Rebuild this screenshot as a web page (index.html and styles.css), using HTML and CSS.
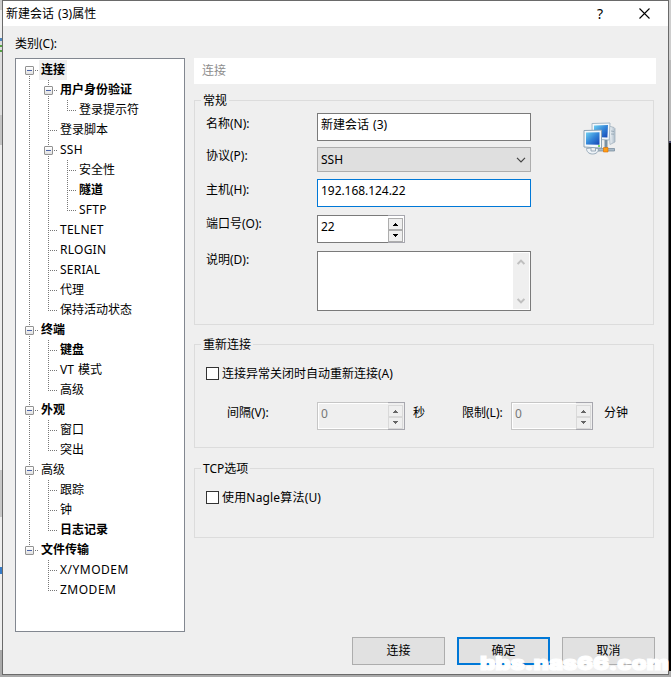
FILE: index.html
```html
<!DOCTYPE html>
<html lang="zh-CN">
<head>
<meta charset="utf-8">
<title>新建会话 (3)属性</title>
<link rel="stylesheet" href="styles.css">
</head>
<body>
<main class="dialog">
  <header class="titlebar">
    <h1>新建会话 (3)属性</h1>
    <span class="help">?</span>
    <svg class="close" width="11" height="11" viewBox="0 0 11 11"><path d="M.5.5l10 10M10.5.5l-10 10" fill="none" stroke="#000" stroke-width="1.1"/></svg>
  </header>
  <div class="category">类别(C):</div>
  <div class="body">
    <nav class="tree">
      <ul>
        <li><div class="row open"><b class="selected">连接</b></div>
          <ul>
            <li><div class="row open"><b>用户身份验证</b></div>
              <ul><li><div class="row">登录提示符</div></li></ul>
            </li>
            <li><div class="row">登录脚本</div></li>
            <li><div class="row open latin">SSH</div>
              <ul>
                <li><div class="row">安全性</div></li>
                <li><div class="row"><b>隧道</b></div></li>
                <li><div class="row latin">SFTP</div></li>
              </ul>
            </li>
            <li><div class="row latin">TELNET</div></li>
            <li><div class="row latin">RLOGIN</div></li>
            <li><div class="row latin">SERIAL</div></li>
            <li><div class="row">代理</div></li>
            <li><div class="row">保持活动状态</div></li>
          </ul>
        </li>
        <li><div class="row open"><b>终端</b></div>
          <ul>
            <li><div class="row"><b>键盘</b></div></li>
            <li><div class="row">VT 模式</div></li>
            <li><div class="row">高级</div></li>
          </ul>
        </li>
        <li><div class="row open"><b>外观</b></div>
          <ul>
            <li><div class="row">窗口</div></li>
            <li><div class="row">突出</div></li>
          </ul>
        </li>
        <li><div class="row open">高级</div>
          <ul>
            <li><div class="row">跟踪</div></li>
            <li><div class="row">钟</div></li>
            <li><div class="row"><b>日志记录</b></div></li>
          </ul>
        </li>
        <li><div class="row open"><b>文件传输</b></div>
          <ul>
            <li><div class="row latin wide">X/YMODEM</div></li>
            <li><div class="row latin wide">ZMODEM</div></li>
          </ul>
        </li>
      </ul>
    </nav>
    <section class="panel">
      <h2>连接</h2>
      <fieldset class="general">
        <legend>常规</legend>
        <div class="form">
          <label>名称(N):</label><div class="field">新建会话 (3)</div>
          <label>协议(P):</label><div class="field select"><span>SSH</span><svg width="10" height="6" viewBox="0 0 10 6"><path d="M1 .8l4 4 4-4" fill="none" stroke="#444" stroke-width="1.2"/></svg></div>
          <label>主机(H):</label><div class="field focus">192.168.124.22</div>
          <label>端口号(O):</label><div class="field spin"><span>22</span><div class="buttons"><i class="up"></i><i class="down"></i></div></div>
          <label>说明(D):</label><div class="field area"><div class="scroll">
            <svg width="8" height="6" viewBox="0 0 8 6"><path d="M.6 5L4 1.6 7.4 5" fill="none" stroke="#bfbfbf" stroke-width="2"/></svg>
            <svg width="8" height="6" viewBox="0 0 8 6"><path d="M.6 1L4 4.4 7.4 1" fill="none" stroke="#bfbfbf" stroke-width="2"/></svg>
          </div></div>
        </div>
        <svg class="session-icon" width="34" height="34" viewBox="0 0 34 34">
          <defs>
            <linearGradient id="screen" x1="0" y1="0" x2="1" y2="1"><stop offset="0" stop-color="#6fd0f2"/><stop offset=".5" stop-color="#3385d8"/><stop offset="1" stop-color="#1545b5"/></linearGradient>
            <linearGradient id="tower" x1="0" y1="0" x2="1" y2="0"><stop offset="0" stop-color="#f8fbfd"/><stop offset="1" stop-color="#aebdca"/></linearGradient>
          </defs>
          <path d="M26 4l5 1.5 1 1V20l-5 2.500z" fill="url(#tower)" stroke="#a4b3bf" stroke-width=".8"/>
          <path d="M28 9l3 .5M28 12l3 .2" stroke="#8799a7" stroke-width=".7"/>
          <path d="M9 1.500l18-.5-.8 17-17-1z" fill="#f4f8fb" stroke="#a5b8c7"/>
          <path d="M11 3.500l14-.4-.6 12.400-13.400-.5z" fill="url(#screen)"/>
          <path d="M21.500 18h3v9h-3z" fill="#7b91a3"/>
          <path d="M13 26.500h18.500v2.500H13z" fill="#a9bac8" stroke="#71879a" stroke-width=".7"/>
          <path d="M3.500 26.500c0 3 2.300 5.500 6 5.500s6-2 6-5l-3-1v3H8v-3z" fill="#eef3f7" stroke="#91a4b4" stroke-width=".9"/>
          <path d="M1 8.500l17.500-.4v18L1 25z" fill="#f4f8fb" stroke="#8ea3b4"/>
          <path d="M3 10.500l13.500-.3v12.600L3 22.500z" fill="url(#screen)"/>
          <path d="M15 24h2" stroke="#5ed22f" stroke-width="1.300"/>
          <path d="M20.500 25.500h4.500v4.500h-4.500z" fill="#ff9d13" stroke="#d96b05" stroke-width=".6"/>
        </svg>
      </fieldset>
      <fieldset class="reconnect">
        <legend>重新连接</legend>
        <label class="check"><i></i>连接异常关闭时自动重新连接(A)</label>
        <div class="timing">
          <label>间隔(V):</label><div class="field spin disabled"><span>0</span><div class="buttons"><i class="up"></i><i class="down"></i></div></div><span>秒</span>
          <label>限制(L):</label><div class="field spin disabled"><span>0</span><div class="buttons"><i class="up"></i><i class="down"></i></div></div><span>分钟</span>
        </div>
      </fieldset>
      <fieldset class="tcp">
        <legend>TCP选项</legend>
        <label class="check nagle"><i></i>使用Nagle算法(U)</label>
      </fieldset>
    </section>
  </div>
  <footer>
    <div class="button">连接</div><div class="button primary">确定</div><div class="button">取消</div>
  </footer>
</main>
<aside class="desktop"></aside>
<div class="watermark">bbs.nas66.com</div>
</body>
</html>
```
FILE: styles.css
```css
*, *::before { box-sizing: border-box; }
body {
  margin: 0;
  width: 671px;
  height: 677px;
  overflow: hidden;
  position: relative;
  display: flex;
  padding-left: 2px;
  background: linear-gradient(#ccc 0 10px, #eee 10px 38px, #4d84bc 38px 41px, #ddd 41px 45px, #55a344 45px 47px, #ddd 47px 50px, #55a344 50px 52px, #ddd 52px 115px, #c4c4c4 115px 145px, #ececec 145px 470px, #c8c8c8 470px 517px, #eee 517px 567px, #357bc8 567px 574px, #eee 574px 650px, #aaa 650px);
  font: 12px/16px "Noto Sans", "Noto Sans CJK SC", sans-serif;
  word-spacing: 1px;
  color: #000;
}
h1, h2 { margin: 0; font: inherit; }
ul { list-style: none; margin: 0; padding: 0; }
.latin { letter-spacing: .25px; }
.latin.wide { letter-spacing: .5px; }
.dialog {
  width: 667px;
  height: 675px;
  flex: none;
  border: 1px solid #6a6a6a;
  background: #efefef;
  display: flex;
  flex-direction: column;
}
.desktop {
  width: 2px;
  flex: none;
  background: linear-gradient(#cecece 0 60px, #b9b9b9 60px 141px, #446 141px 143px, #000 143px 671px, #aaa 671px);
}
body::after {
  content: "";
  position: absolute;
  left: 0;
  right: 0;
  bottom: 0;
  height: 2px;
  background: #aaa;
}
.titlebar {
  height: 25px;
  background: #fff;
  display: flex;
  align-items: center;
  padding: 0 18px 0 3px;
}
.titlebar h1 { flex: 1; }
.help { font-size: 14px; margin-right: 36px; }
.category { padding: 10px 0 0 12px; height: 32px; }
.body { display: flex; padding-left: 12px; gap: 9px; }
.tree {
  width: 170px;
  height: 574px;
  border: 1px solid #828790;
  background: #fff;
  padding: 1px 0 0;
}
.tree ul ul { margin-left: 19px; }
.tree li {
  background: repeating-linear-gradient(#777 0 1px, transparent 1px 2px) 13px 0 / 1px 100% no-repeat;
}
.tree li:last-child { background-size: 1px 11px; }
.tree > ul > li:first-child { background-position: 13px 10px; }
.row {
  height: 20px;
  line-height: 20px;
  padding-left: 25px;
  white-space: nowrap;
  background: repeating-linear-gradient(90deg, #777 0 1px, transparent 1px 2px) 13px 10px / 9px 1px no-repeat;
}
.row.open { display: flex; }
.row.open::before {
  content: "";
  flex: none;
  width: 9px;
  height: 9px;
  margin: 6px 7px 0 -16px;
  border: 1px solid #919191;
  border-radius: 1px;
  background: linear-gradient(#4b63a7, #4b63a7) 1px 3px / 5px 1px no-repeat, linear-gradient(#fff, #e1e1e1);
}
.selected { background: #efefef; margin-left: -2px; padding: 0 2px; }
.panel { width: 462px; }
.panel h2 { height: 26px; line-height: 25px; padding-left: 8px; background: #fff; color: #8d8d8d; }
fieldset {
  margin: 0 3px 0 0;
  padding: 0 0 0 11px;
  border: 1px solid #dcdcdc;
  min-width: 0;
  width: 460px;
}
legend { height: 17px; line-height: 17px; padding: 0 2px; margin-left: -5px; }
.general { height: 233px; margin-top: 8px; display: flex; padding-top: 4px; }
.reconnect { height: 112px; margin-top: 11px; padding-top: 14px; }
.tcp { height: 78px; margin-top: 12px; padding-top: 14px; }
.form {
  display: grid;
  grid-template-columns: 111px 214px;
  grid-template-rows: 34px 32px 36px 36px 60px;
  align-items: start;
  height: 198px;
}
.form label { padding-top: 3px; }
.form label:nth-of-type(2) { padding-top: 1px; }
.form label:nth-of-type(4) { padding-top: 1px; }
.form label:nth-of-type(5) { padding-top: 1px; }
.field {
  height: 28px;
  border: 1px solid #7a7a7a;
  background: #fff;
  padding: 3px 3px 0;
}
.field.select {
  height: 25px;
  display: flex;
  align-items: center;
  justify-content: space-between;
  padding: 1px 4px 0 3px;
  border-color: #adadad;
  background: #dfdfdf;
}
.field.focus { border-color: #0078d7; letter-spacing: -.05px; }
.field.spin { width: 88px; display: flex; justify-content: space-between; padding: 3px 1px 0 3px; }
.buttons {
  width: 17px;
  height: 28px;
  margin: -4px -2px 0 0;
  padding: 2px 1px 1px 0;
  border: 1px solid #a7a7ae;
  border-left: 0;
  background: #fff;
}
.buttons i {
  display: block;
  width: 15px;
  height: 12px;
  padding: 4px 0 0 4px;
  border: 1px solid #adadad;
  background: #efefef;
}
.buttons .down { padding-top: 3px; }
.buttons i::before {
  content: "";
  display: block;
  width: 5px;
  height: 3px;
  background: #000;
  clip-path: polygon(40% 0, 60% 0, 60% 33.3%, 80% 33.3%, 80% 66.6%, 100% 66.6%, 100% 100%, 0 100%, 0 66.6%, 20% 66.6%, 20% 33.3%, 40% 33.3%);
}
.buttons .down::before { transform: scaleY(-1); }
.field.area { height: 60px; padding: 1px; display: flex; justify-content: flex-end; }
.scroll {
  width: 16px;
  background: #efefef;
  display: flex;
  flex-direction: column;
  align-items: center;
  justify-content: space-between;
  padding: 6px 0 5px;
}
.session-icon { margin: 9px 0 0 52px; }
.check { display: flex; align-items: center; gap: 3px; height: 13px; }
.check i { width: 13px; height: 13px; border: 1px solid #333; background: #fff; }
.check.nagle { letter-spacing: .17px; }
.timing {
  display: grid;
  grid-template-columns: 90px 88px 57px 49px 82px 1fr;
  margin: 22px 0 0 21px;
}
.timing label, .timing > span { padding-top: 3px; }
.timing > span { padding-left: 8px; }
.timing > span:last-child { padding-left: 11px; }
.timing .spin { width: auto; }
.disabled { color: #777; background: #efefef; border-color: #c6c6c6; box-shadow: inset 0 0 0 1px #fff; }
.disabled .buttons { background: #efefef; }
.disabled .buttons i { border-color: #d9d9d9; }
.disabled .buttons i::before { background: #666; }
footer { display: flex; justify-content: flex-end; gap: 12px; padding: 5px 13px 0 0; }
.button {
  width: 93px;
  height: 28px;
  border: 1px solid #adadad;
  background: #e1e1e1;
  text-align: center;
  line-height: 26px;
}
.button.primary { border: 2px solid #0078d7; line-height: 24px; }
.watermark {
  position: absolute;
  left: 480px;
  top: 653px;
  font: 900 19px/22px Inter, "Liberation Sans", sans-serif;
  color: #fff;
  -webkit-text-stroke: 1.1px #fff;
  transform: scaleX(1.25);
  transform-origin: left;
  white-space: nowrap;
}
```
